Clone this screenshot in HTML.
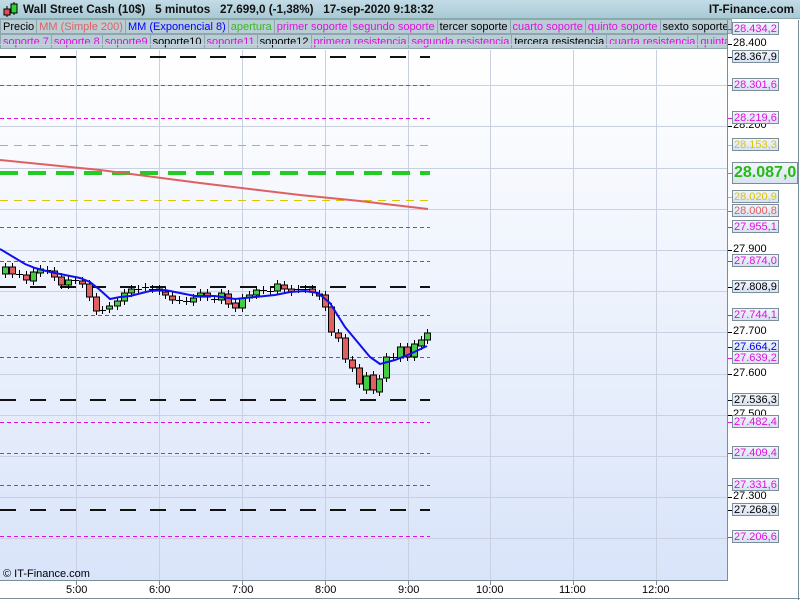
<!DOCTYPE html>
<html><head><meta charset="utf-8"><style>
*{margin:0;padding:0;box-sizing:border-box}
body{width:800px;height:600px;overflow:hidden;background:#fff;font-family:"Liberation Sans",sans-serif;position:relative}
#hdr{position:absolute;left:0;top:0;width:800px;height:19px;background:linear-gradient(#c3dce6,#a9c9d6);border-bottom:1px solid #8aa;}
#hdr b{position:absolute;top:3px;font-size:11.7px;color:#111}
.row{position:absolute;left:0;height:15px;white-space:nowrap;font-size:11px}
.row span{display:inline-block;height:15px;line-height:14px;padding:0 2px;background:#b9cdd5;border:1px solid #8fa6b0;margin-right:-1px;vertical-align:top}
.lab{position:absolute;left:732px;height:13px;font-size:11px;line-height:12px;padding:0 1px;border:1px solid #7a8e99;background:linear-gradient(#f2f5fb,#d8e2f2)}
.tk{position:absolute;left:733px;font-size:11px;line-height:12px;color:#000}
.tl{position:absolute;top:584px;font-size:11px;color:#000}
</style></head><body>
<div id="hdr">
<svg style="position:absolute;left:2px;top:1px" width="18" height="17"><line x1="5" y1="5" x2="5" y2="16" stroke="#000"/><rect x="2" y="8" width="6" height="6" fill="#e05050" stroke="#000"/><line x1="12" y1="1" x2="12" y2="14" stroke="#000"/><rect x="9" y="3" width="6" height="9" fill="#30d030" stroke="#000"/></svg>
<b style="left:23px">Wall Street Cash (10$)&nbsp;&nbsp;&nbsp;5 minutos&nbsp;&nbsp;&nbsp;27.699,0 (-1,38%)&nbsp;&nbsp;&nbsp;17-sep-2020 9:18:32</b>
<b style="right:6px">IT-Finance.com</b>
</div>
<div class="row" style="top:19px"><span>Precio</span><span style="color:#e06060">MM (Simple 200)</span><span style="color:#0000ff">MM (Exponencial 8)</span><span style="color:#33bb22">apertura</span><span style="color:#e010e0">primer soporte</span><span style="color:#e010e0">segundo soporte</span><span>tercer soporte</span><span style="color:#e010e0">cuarto soporte</span><span style="color:#e010e0">quinto soporte</span><span>sexto soporte</span></div>
<div class="row" style="top:34px;width:728px;overflow:hidden"><span style="color:#e010e0">soporte 7</span><span style="color:#e010e0">soporte 8</span><span style="color:#e010e0">soporte9</span><span>soporte10</span><span style="color:#e010e0">soporte11</span><span>soporte12</span><span style="color:#e010e0">primera resistencia</span><span style="color:#e010e0">segunda resistencia</span><span>tercera resistencia</span><span style="color:#e010e0">cuarta resistencia</span><span style="color:#e010e0">quinta resistencia</span></div>
<svg id="ch" style="position:absolute;left:0;top:0" width="800" height="600">
<defs><linearGradient id="bg" x1="0" y1="0" x2="0" y2="1"><stop offset="0" stop-color="#ffffff"/><stop offset="1" stop-color="#d9e4fa"/></linearGradient></defs>
<rect x="0" y="50" width="727" height="530" fill="url(#bg)"/>
<g id="grid" stroke="#c9d0e0" stroke-width="1"></g>
<line x1="727.5" y1="20" x2="727.5" y2="580" stroke="#7a8e99"/>
<line x1="0" y1="580.5" x2="728" y2="580.5" stroke="#7a8e99"/>
<line x1="798.5" y1="20" x2="798.5" y2="600" stroke="#7a8e99"/>
<line x1="0" y1="598.5" x2="800" y2="598.5" stroke="#7a8e99"/>
<g id="lines"></g>
<polyline points="0,160 100,170 200,183 300,195 360,201 428,209" fill="none" stroke="#e06060" stroke-width="2"/>
<g id="cnd"></g>
<polyline points="0,249 25,264 35,268 50,272 65,275 80,278 90,282 100,290 110,299 120,297 130,296 150,291 165,290 180,293 195,296 215,296 235,299 255,297 275,295 290,292 305,291 318,293 330,303 345,327 360,345 370,357 380,364 395,360 410,354 427,346" fill="none" stroke="#1010ee" stroke-width="2"/>
<g id="ax"></g>
</svg>
<div id="labs"></div>
<div style="position:absolute;left:3px;top:568px;font-size:11px">© IT-Finance.com</div>
<script>
var S='http://www.w3.org/2000/svg';
function el(p,t,a){var e=document.createElementNS(S,t);for(var k in a)e.setAttribute(k,a[k]);p.appendChild(e);return e}
var g=document.getElementById('grid');
[44,85,126,168,209,250,291,332,374,415,456,497,538].forEach(function(y){el(g,'line',{x1:0,x2:727,y1:y+.5,y2:y+.5})});
var tx=[76,159,242,325,408,490,573,656],tn=['5:00','6:00','7:00','8:00','9:00','10:00','11:00','12:00'];
tx.forEach(function(x,i){el(g,'line',{x1:x+.5,x2:x+.5,y1:50,y2:580});el(document.getElementById('ax'),'line',{x1:x+.5,x2:x+.5,y1:580,y2:585,stroke:'#7a8e99'});
var d=document.createElement('div');d.className='tl';d.style.left=(x-(tn[i].length>4?14:10))+'px';d.textContent=tn[i];document.body.appendChild(d)});
var L=document.getElementById('lines');
[57,287,400,510].forEach(function(y){el(L,'line',{x1:0,x2:430,y1:y,y2:y,stroke:'#111','stroke-width':2,'stroke-dasharray':'16,14'})});
[85,118,227,261,315,357,422,453,485,536].forEach(function(y){el(L,'line',{x1:0,x2:430,y1:y+.5,y2:y+.5,stroke:'#dd10dd','stroke-width':1,'stroke-dasharray':'4,3'})});
el(L,'line',{x1:0,x2:430,y1:145.5,y2:145.5,stroke:'#aab','stroke-dasharray':'8,6'});
el(L,'line',{x1:0,x2:430,y1:200.5,y2:200.5,stroke:'#d8c800','stroke-dasharray':'8,6'});
el(L,'line',{x1:0,x2:430,y1:173,y2:173,stroke:'#22cc22','stroke-width':4,'stroke-dasharray':'18,10'});
var C=[[5,'g',267,274],[12,'r',267,274],[19,'d',274],[26,'r',275,280],[33,'g',272,281],[40,'g',269,273],[47,'d',270],[54,'r',271,277],[61,'r',277,285],[68,'g',280,285],[75,'d',280],[82,'r',281,284],[89,'r',284,297],[96,'r',297,311],[102,'d',310],[109,'g',306,309],[117,'g',301,306],[124,'g',293,301],[131,'g',289,293],[138,'d',289],[145,'d',287],[152,'d',289],[159,'r',289,291],[165,'r',292,295],[172,'r',296,300],[179,'d',300],[186,'d',301],[193,'g',298,302],[200,'g',293,297],[207,'r',293,297],[214,'d',299],[221,'g',293,300],[228,'r',294,304],[235,'r',303,308],[242,'g',298,308],[249,'g',295,298],[256,'g',290,295],[263,'d',290],[270,'d',291],[277,'g',284,291],[284,'r',285,289],[291,'r',289,292],[298,'d',289],[305,'d',289],[312,'r',289,292],[319,'r',294,296],[325,'r',295,307],[331,'r',307,332],[338,'r',333,338],[345,'r',338,359],[352,'r',360,368],[359,'r',368,384],[366,'g',376,390],[373,'r',375,390],[379,'g',379,392],[386,'g',357,378],[393,'d',357],[400,'g',347,358],[407,'r',347,357],[414,'g',344,357],[421,'g',340,346],[427,'g',333,340]];
var K=document.getElementById('cnd');
C.forEach(function(c){var x=c[0];var t=c[2],b=c[3]||c[2];el(K,'line',{x1:x+.5,x2:x+.5,y1:t-4,y2:b+4,stroke:'#000'});
if(c[1]=='d')el(K,'line',{x1:x-3,x2:x+4,y1:t+.5,y2:t+.5,stroke:'#000'});else el(K,'rect',{x:x-2.5,y:t,width:6,height:b-t,fill:c[1]=='g'?'#44cc44':'#e06060',stroke:'#000','stroke-width':1})});
var LB=[[29,'28.434,2','#e010e0',1],[44,'28.400','#000',0],[57,'28.367,9','#000',1],[85,'28.301,6','#e010e0',1],[126,'28.200','#000',0],[118,'28.219,6','#e010e0',1],[145,'28.153,3','#d8c800',1],[197,'28.020,9','#d8c800',1],[211,'28.000,8','#e06060',1],[227,'27.955,1','#e010e0',1],[250,'27.900','#000',0],[261,'27.874,0','#e010e0',1],[287,'27.808,9','#000',1],[315,'27.744,1','#e010e0',1],[332,'27.700','#000',0],[374,'27.600','#000',0],[347,'27.664,2','#0000ee',1],[358,'27.639,2','#e010e0',1],[415,'27.500','#000',0],[400,'27.536,3','#000',1],[422,'27.482,4','#e010e0',1],[453,'27.409,4','#e010e0',1],[485,'27.331,6','#e010e0',1],[497,'27.300','#000',0],[510,'27.268,9','#000',1],[537,'27.206,6','#e010e0',1]];
var A=document.getElementById('ax');
LB.forEach(function(l){el(A,'line',{x1:728,x2:732,y1:l[0]+.5,y2:l[0]+.5,stroke:l[2]});var d=document.createElement('div');d.className=l[3]?'lab':'tk';d.style.top=(l[0]-7)+'px';d.style.color=l[2];d.textContent=l[1];document.body.appendChild(d)});
el(A,'line',{x1:728,x2:732,y1:173.5,y2:173.5,stroke:'#22cc22'});
var d=document.createElement('div');d.className='lab';d.style.cssText='top:162px;height:22px;font-size:16px;line-height:20px;font-weight:bold;color:#22bb11';d.textContent='28.087,0';document.body.appendChild(d);
</script>
</body></html>
